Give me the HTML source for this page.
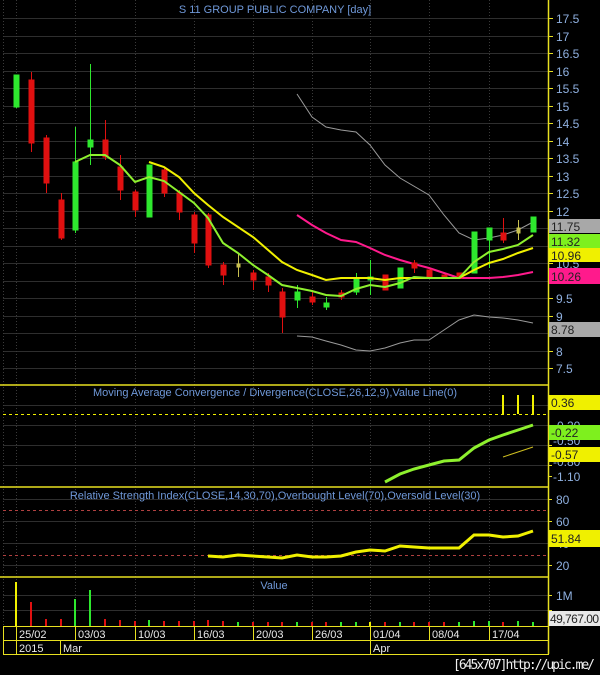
<!DOCTYPE html>
<html><head><meta charset="utf-8"><style>
html,body{margin:0;padding:0;background:#000;}
svg{display:block;font-family:"Liberation Sans",sans-serif;}
.ax{fill:#8fb0e0;font-size:12px;}
.t{fill:#6f98d8;font-size:11px;}
.bx{font-size:12px;fill:#222;}
.d{fill:#e8e8e8;font-size:11px;}
</style></head><body>
<svg width="600" height="675" viewBox="0 0 600 675" xmlns="http://www.w3.org/2000/svg">
<rect width="600" height="675" fill="#000"/>
<!-- grid horizontals price -->
<g stroke="#2e2e2e" stroke-width="1">
<line x1="3" x2="548" y1="18.5" y2="18.5"/><line x1="3" x2="548" y1="36.5" y2="36.5"/><line x1="3" x2="548" y1="53.5" y2="53.5"/><line x1="3" x2="548" y1="71.5" y2="71.5"/><line x1="3" x2="548" y1="88.5" y2="88.5"/><line x1="3" x2="548" y1="106.5" y2="106.5"/><line x1="3" x2="548" y1="123.5" y2="123.5"/><line x1="3" x2="548" y1="141.5" y2="141.5"/><line x1="3" x2="548" y1="158.5" y2="158.5"/><line x1="3" x2="548" y1="176.5" y2="176.5"/><line x1="3" x2="548" y1="193.5" y2="193.5"/><line x1="3" x2="548" y1="211.5" y2="211.5"/><line x1="3" x2="548" y1="228.5" y2="228.5"/><line x1="3" x2="548" y1="246.5" y2="246.5"/><line x1="3" x2="548" y1="263.5" y2="263.5"/><line x1="3" x2="548" y1="281.5" y2="281.5"/><line x1="3" x2="548" y1="298.5" y2="298.5"/><line x1="3" x2="548" y1="316.5" y2="316.5"/><line x1="3" x2="548" y1="333.5" y2="333.5"/><line x1="3" x2="548" y1="351.5" y2="351.5"/><line x1="3" x2="548" y1="368.5" y2="368.5"/>
<line x1="3" x2="548" y1="405.5" y2="405.5"/><line x1="3" x2="548" y1="425.5" y2="425.5"/><line x1="3" x2="548" y1="445.5" y2="445.5"/><line x1="3" x2="548" y1="465.5" y2="465.5"/>
<line x1="3" x2="548" y1="499.5" y2="499.5"/><line x1="3" x2="548" y1="521.5" y2="521.5"/><line x1="3" x2="548" y1="543.5" y2="543.5"/><line x1="3" x2="548" y1="565.5" y2="565.5"/>
<line x1="3" x2="548" y1="595.5" y2="595.5"/><line x1="3" x2="548" y1="610.5" y2="610.5"/>
</g>
<g stroke="#3a3a3a" stroke-width="1" stroke-dasharray="1,2">
<line x1="3.5" x2="3.5" y1="0" y2="626"/><line x1="16.5" x2="16.5" y1="0" y2="626"/><line x1="75.5" x2="75.5" y1="0" y2="626"/><line x1="135.5" x2="135.5" y1="0" y2="626"/><line x1="194.5" x2="194.5" y1="0" y2="626"/><line x1="253.5" x2="253.5" y1="0" y2="626"/><line x1="312.5" x2="312.5" y1="0" y2="626"/><line x1="370.5" x2="370.5" y1="0" y2="626"/><line x1="429.5" x2="429.5" y1="0" y2="626"/><line x1="489.5" x2="489.5" y1="0" y2="626"/>
</g>
<text x="275" y="13" class="t" text-anchor="middle">S 11 GROUP PUBLIC COMPANY [day]</text>

<!-- bollinger -->
<polyline fill="none" stroke="#9a9a9a" stroke-width="1" points="297,94 312,117 326,127 341,130 356,132 370,145 385,165 400,178 429,195 444,215 459,233 474,240 489,238 503,235 518,230 533,222"/>
<polyline fill="none" stroke="#9a9a9a" stroke-width="1" points="297,336 312,337 326,341 341,345 356,350 370,351 385,348 400,343 414,340 429,340 444,330 459,320 474,315 489,317 503,318 518,320 533,323"/>
<!-- magenta -->
<polyline fill="none" stroke="#ff1a8c" stroke-width="2" points="297,215 312,225 326,233 341,240 356,242 370,248 385,255 400,260 414,264 429,268 444,273 459,278 474,278 489,278 503,277 518,275 533,272"/>
<!-- candles -->
<g stroke-width="1">
<g stroke="#2ee82e" fill="#2ee82e"><line x1="16.5" x2="16.5" y1="75" y2="108"/><rect x="14" y="75" width="5" height="32"/></g>
<g stroke="#e01010" fill="#e01010"><line x1="31.5" x2="31.5" y1="72" y2="152"/><rect x="29" y="80" width="5" height="63"/></g>
<g stroke="#e01010" fill="#e01010"><line x1="46.5" x2="46.5" y1="135" y2="193"/><rect x="44" y="138" width="5" height="45"/></g>
<g stroke="#e01010" fill="#e01010"><line x1="61.5" x2="61.5" y1="193" y2="240"/><rect x="59" y="200" width="5" height="38"/></g>
<g stroke="#2ee82e" fill="#2ee82e"><line x1="75.5" x2="75.5" y1="127" y2="233"/><rect x="73" y="162" width="5" height="68"/></g>
<g stroke="#2ee82e" fill="#2ee82e"><line x1="90.5" x2="90.5" y1="64" y2="165"/><rect x="88" y="140" width="5" height="7"/></g>
<g stroke="#e01010" fill="#e01010"><line x1="105.5" x2="105.5" y1="120" y2="160"/><rect x="103" y="140" width="5" height="17"/></g>
<g stroke="#e01010" fill="#e01010"><line x1="120.5" x2="120.5" y1="155" y2="200"/><rect x="118" y="167" width="5" height="23"/></g>
<g stroke="#e01010" fill="#e01010"><line x1="135.5" x2="135.5" y1="190" y2="217"/><rect x="133" y="192" width="5" height="18"/></g>
<g stroke="#2ee82e" fill="#2ee82e"><rect x="147" y="165" width="5" height="52"/></g>
<g stroke="#e01010" fill="#e01010"><line x1="164.5" x2="164.5" y1="168" y2="197"/><rect x="162" y="170" width="5" height="23"/></g>
<g stroke="#e01010" fill="#e01010"><line x1="179.5" x2="179.5" y1="190" y2="220"/><rect x="177" y="193" width="5" height="19"/></g>
<g stroke="#e01010" fill="#e01010"><line x1="194.5" x2="194.5" y1="212" y2="253"/><rect x="192" y="215" width="5" height="28"/></g>
<g stroke="#e01010" fill="#e01010"><line x1="208.5" x2="208.5" y1="213" y2="268"/><rect x="206" y="215" width="5" height="50"/></g>
<g stroke="#e01010" fill="#e01010"><line x1="223.5" x2="223.5" y1="262" y2="285"/><rect x="221" y="265" width="5" height="10"/></g>
<g stroke="#c8c050" fill="#c8c050"><line x1="238.5" x2="238.5" y1="253" y2="277"/><rect x="237" y="264" width="3" height="3"/></g>
<g stroke="#e01010" fill="#e01010"><line x1="253.5" x2="253.5" y1="270" y2="290"/><rect x="251" y="273" width="5" height="7"/></g>
<g stroke="#e01010" fill="#e01010"><line x1="268.5" x2="268.5" y1="273" y2="292"/><rect x="266" y="277" width="5" height="8"/></g>
<g stroke="#e01010" fill="#e01010"><line x1="282.5" x2="282.5" y1="288" y2="333"/><rect x="280" y="292" width="5" height="25"/></g>
<g stroke="#2ee82e" fill="#2ee82e"><line x1="297.5" x2="297.5" y1="285" y2="308"/><rect x="295" y="292" width="5" height="8"/></g>
<g stroke="#e01010" fill="#e01010"><line x1="312.5" x2="312.5" y1="290" y2="305"/><rect x="310" y="297" width="5" height="5"/></g>
<g stroke="#2ee82e" fill="#2ee82e"><line x1="326.5" x2="326.5" y1="297" y2="310"/><rect x="324" y="303" width="5" height="4"/></g>
<g stroke="#e01010" fill="#e01010"><line x1="341.5" x2="341.5" y1="290" y2="300"/><rect x="339" y="293" width="5" height="4"/></g>
<g stroke="#2ee82e" fill="#2ee82e"><line x1="356.5" x2="356.5" y1="273" y2="295"/><rect x="354" y="278" width="5" height="14"/></g>
<g stroke="#2ee82e" fill="#2ee82e"><line x1="370.5" x2="370.5" y1="260" y2="295"/><rect x="368" y="277" width="5" height="3"/></g>
<g stroke="#e01010" fill="#e01010"><rect x="383" y="275" width="5" height="15"/></g>
<g stroke="#2ee82e" fill="#2ee82e"><rect x="398" y="268" width="5" height="20"/></g>
<g stroke="#e01010" fill="#e01010"><line x1="414.5" x2="414.5" y1="260" y2="273"/><rect x="412" y="263" width="5" height="5"/></g>
<g stroke="#e01010" fill="#e01010"><rect x="427" y="270" width="5" height="7"/></g>
<g stroke="#e01010" fill="#e01010"><rect x="442" y="275" width="5" height="3"/></g>
<g stroke="#e01010" fill="#e01010"><rect x="457" y="273" width="5" height="5"/></g>
<g stroke="#2ee82e" fill="#2ee82e"><rect x="472" y="232" width="5" height="41"/></g>
<g stroke="#2ee82e" fill="#2ee82e"><line x1="489.5" x2="489.5" y1="228" y2="268"/><rect x="487" y="228" width="5" height="12"/></g>
<g stroke="#e01010" fill="#e01010"><line x1="503.5" x2="503.5" y1="218" y2="243"/><rect x="501" y="233" width="5" height="7"/></g>
<g stroke="#c8c050" fill="#c8c050"><line x1="518.5" x2="518.5" y1="220" y2="240"/><rect x="517" y="228" width="3" height="5"/></g>
<g stroke="#2ee82e" fill="#2ee82e"><rect x="531" y="217" width="5" height="15"/></g>
</g>
<!-- MAs -->
<polyline fill="none" stroke="#f0f000" stroke-width="2" points="149,162 164,167 179,177 194,193 208,205 223,217 253,237 282,262 297,270 312,275 326,280 341,278 370,278 385,280 400,278 429,278 459,278 474,270 489,263 503,259 518,253 533,248"/>
<polyline fill="none" stroke="#8ef02e" stroke-width="2" points="75,162 90,155 105,155 120,165 135,182 149,177 164,181 179,192 194,203 208,218 223,243 238,253 253,265 268,275 282,285 297,288 312,291 326,295 341,296 356,289 370,285 385,287 400,283 414,277 429,278 459,278 474,262 489,252 503,249 518,245 533,235"/>

<!-- MACD -->
<line x1="3" x2="548" y1="414.5" y2="414.5" stroke="#f0f000" stroke-dasharray="3,3"/>
<g stroke="#f0f000" stroke-width="2"><line x1="503" x2="503" y1="395" y2="414"/><line x1="518" x2="518" y1="395" y2="414"/><line x1="533" x2="533" y1="395" y2="414"/></g>
<polyline fill="none" stroke="#8ef02e" stroke-width="3" points="385,482 400,474 414,469 429,465 444,461 459,460 474,448 489,440 503,435 518,430 533,425"/>
<line x1="503" y1="457" x2="533" y2="447" stroke="#d0c020" stroke-width="1"/>
<text x="275" y="396" class="t" text-anchor="middle">Moving Average Convergence / Divergence(CLOSE,26,12,9),Value Line(0)</text>

<!-- RSI -->
<line x1="3" x2="548" y1="510.5" y2="510.5" stroke="#b04040" stroke-dasharray="3,3"/>
<line x1="3" x2="548" y1="555.5" y2="555.5" stroke="#b04040" stroke-dasharray="3,3"/>
<polyline fill="none" stroke="#f0f000" stroke-width="3" points="208,556 223,557 238,555 253,556 268,557 282,558 297,555 312,557 326,557 341,556 356,552 370,550 385,551 400,546 414,547 429,548 444,548 459,548 474,535 489,535 503,537 518,536 533,531"/>
<text x="275" y="499" class="t" text-anchor="middle">Relative Strength Index(CLOSE,14,30,70),Overbought Level(70),Oversold Level(30)</text>

<!-- Value -->
<text x="274" y="589" class="t" text-anchor="middle">Value</text>
<g stroke-width="2">
<line x1="16" x2="16" y1="582" y2="626" stroke="#f0f000"/>
<line x1="31" x2="31" y1="602" y2="626" stroke="#e01010"/>
<line x1="46" x2="46" y1="619" y2="626" stroke="#e01010"/>
<line x1="61" x2="61" y1="619" y2="626" stroke="#e01010"/>
<line x1="75" x2="75" y1="599" y2="626" stroke="#2ee82e"/>
<line x1="90" x2="90" y1="590" y2="626" stroke="#2ee82e"/>
<line x1="105" x2="105" y1="619" y2="626" stroke="#e01010"/>
<line x1="120" x2="120" y1="620" y2="626" stroke="#e01010"/>
<line x1="135" x2="135" y1="621" y2="626" stroke="#e01010"/>
<line x1="149" x2="149" y1="620" y2="626" stroke="#2ee82e"/>
<line x1="164" x2="164" y1="621" y2="626" stroke="#e01010"/>
<line x1="179" x2="179" y1="621" y2="626" stroke="#e01010"/>
<line x1="194" x2="194" y1="621" y2="626" stroke="#e01010"/>
<line x1="208" x2="208" y1="620" y2="626" stroke="#e01010"/>
<line x1="223" x2="223" y1="621" y2="626" stroke="#e01010"/>
<line x1="238" x2="238" y1="622" y2="626" stroke="#2ee82e"/>
<line x1="253" x2="253" y1="622" y2="626" stroke="#e01010"/>
<line x1="268" x2="268" y1="622" y2="626" stroke="#e01010"/>
<line x1="282" x2="282" y1="622" y2="626" stroke="#e01010"/>
<line x1="297" x2="297" y1="622" y2="626" stroke="#2ee82e"/>
<line x1="312" x2="312" y1="622" y2="626" stroke="#e01010"/>
<line x1="326" x2="326" y1="622" y2="626" stroke="#e01010"/>
<line x1="341" x2="341" y1="622" y2="626" stroke="#2ee82e"/>
<line x1="356" x2="356" y1="622" y2="626" stroke="#2ee82e"/>
<line x1="370" x2="370" y1="622" y2="626" stroke="#f0f000"/>
<line x1="385" x2="385" y1="622" y2="626" stroke="#e01010"/>
<line x1="400" x2="400" y1="622" y2="626" stroke="#2ee82e"/>
<line x1="414" x2="414" y1="622" y2="626" stroke="#e01010"/>
<line x1="429" x2="429" y1="622" y2="626" stroke="#e01010"/>
<line x1="444" x2="444" y1="622" y2="626" stroke="#e01010"/>
<line x1="459" x2="459" y1="622" y2="626" stroke="#2ee82e"/>
<line x1="474" x2="474" y1="621" y2="626" stroke="#2ee82e"/>
<line x1="489" x2="489" y1="621" y2="626" stroke="#2ee82e"/>
<line x1="503" x2="503" y1="622" y2="626" stroke="#e01010"/>
<line x1="518" x2="518" y1="621" y2="626" stroke="#2ee82e"/>
<line x1="533" x2="533" y1="622" y2="626" stroke="#2ee82e"/>
</g>

<!-- panel separators -->
<g stroke="#e8e020" stroke-width="1.5">
<line x1="0" x2="548" y1="385" y2="385"/>
<line x1="0" x2="548" y1="487" y2="487"/>
<line x1="0" x2="548" y1="577" y2="577"/>
<line x1="548.5" x2="548.5" y1="0" y2="654"/>
</g>
<!-- date rows -->
<g stroke="#e8e020" stroke-width="1" fill="none">
<rect x="3.5" y="626.5" width="545" height="28"/>
<line x1="3" x2="548" y1="640.5" y2="640.5"/>
<line x1="16.5" x2="16.5" y1="626" y2="654"/>
<line x1="75.5" x2="75.5" y1="626" y2="640"/>
<line x1="135.5" x2="135.5" y1="626" y2="640"/>
<line x1="194.5" x2="194.5" y1="626" y2="640"/>
<line x1="253.5" x2="253.5" y1="626" y2="640"/>
<line x1="312.5" x2="312.5" y1="626" y2="640"/>
<line x1="370.5" x2="370.5" y1="626" y2="654"/>
<line x1="429.5" x2="429.5" y1="626" y2="640"/>
<line x1="489.5" x2="489.5" y1="626" y2="640"/>
<line x1="60.5" x2="60.5" y1="640" y2="654"/>
</g>
<g class="d">
<text x="19" y="638">25/02</text><text x="78" y="638">03/03</text><text x="138" y="638">10/03</text><text x="197" y="638">16/03</text><text x="256" y="638">20/03</text><text x="315" y="638">26/03</text><text x="373" y="638">01/04</text><text x="432" y="638">08/04</text><text x="492" y="638">17/04</text>
<text x="19" y="652">2015</text><text x="63" y="652">Mar</text><text x="373" y="652">Apr</text>
</g>
<text x="453" y="669" fill="#f0f0f0" font-size="13" font-family="DejaVu Sans Mono, Liberation Mono, monospace" textLength="142">[645x707]http://upic.me/</text>

<!-- right axis ticks -->
<g stroke="#e8e020" stroke-width="1">
<line x1="548" x2="553" y1="18.5" y2="18.5"/><line x1="548" x2="553" y1="36.5" y2="36.5"/><line x1="548" x2="553" y1="53.5" y2="53.5"/><line x1="548" x2="553" y1="71.5" y2="71.5"/><line x1="548" x2="553" y1="88.5" y2="88.5"/><line x1="548" x2="553" y1="106.5" y2="106.5"/><line x1="548" x2="553" y1="123.5" y2="123.5"/><line x1="548" x2="553" y1="141.5" y2="141.5"/><line x1="548" x2="553" y1="158.5" y2="158.5"/><line x1="548" x2="553" y1="176.5" y2="176.5"/><line x1="548" x2="553" y1="193.5" y2="193.5"/><line x1="548" x2="553" y1="211.5" y2="211.5"/><line x1="548" x2="553" y1="246.5" y2="246.5"/><line x1="548" x2="553" y1="263.5" y2="263.5"/><line x1="548" x2="553" y1="298.5" y2="298.5"/><line x1="548" x2="553" y1="316.5" y2="316.5"/><line x1="548" x2="553" y1="351.5" y2="351.5"/><line x1="548" x2="553" y1="368.5" y2="368.5"/>
<line x1="548" x2="552" y1="405.5" y2="405.5"/><line x1="548" x2="552" y1="425.5" y2="425.5"/><line x1="548" x2="552" y1="445.5" y2="445.5"/><line x1="548" x2="552" y1="465.5" y2="465.5"/><line x1="548" x2="552" y1="476.5" y2="476.5"/>
<line x1="548" x2="552" y1="499.5" y2="499.5"/><line x1="548" x2="552" y1="521.5" y2="521.5"/><line x1="548" x2="552" y1="565.5" y2="565.5"/>
<line x1="548" x2="552" y1="595.5" y2="595.5"/><line x1="548" x2="552" y1="610.5" y2="610.5"/>
</g>
<g class="ax">
<text x="556" y="23">17.5</text><text x="556" y="41">17</text><text x="556" y="58">16.5</text><text x="556" y="76">16</text><text x="556" y="93">15.5</text><text x="556" y="111">15</text><text x="556" y="128">14.5</text><text x="556" y="146">14</text><text x="556" y="163">13.5</text><text x="556" y="181">13</text><text x="556" y="198">12.5</text><text x="556" y="216">12</text><text x="556" y="268">10.5</text><text x="556" y="303">9.5</text><text x="556" y="321">9</text><text x="556" y="356">8</text><text x="556" y="373">7.5</text>
<text x="556" y="410">0.10</text><text x="553" y="430">-0.20</text><text x="553" y="445">-0.50</text><text x="553" y="466">-0.80</text><text x="553" y="481">-1.10</text>
<text x="556" y="504">80</text><text x="556" y="526">60</text><text x="556" y="548">40</text><text x="556" y="570">20</text>
<text x="556" y="600">1M</text>
</g>
<!-- value boxes -->
<rect x="549" y="219" width="51" height="14" fill="#a8a8a8"/><text x="551" y="231" class="bx">11.75</text>
<rect x="549" y="234" width="51" height="14" fill="#7ef01e"/><text x="551" y="246" class="bx">11.32</text>
<rect x="549" y="248" width="51" height="14" fill="#f0f000"/><text x="551" y="260" class="bx">10.96</text>
<rect x="549" y="268" width="51" height="16" fill="#ff1a8c"/><text x="551" y="281" class="bx">10.26</text>
<rect x="549" y="322" width="51" height="15" fill="#a8a8a8"/><text x="551" y="334" class="bx">8.78</text>
<rect x="549" y="395" width="51" height="15" fill="#f0f000"/><text x="551" y="407" class="bx">0.36</text>
<rect x="549" y="425" width="51" height="15" fill="#7ef01e"/><text x="551" y="437" class="bx">-0.22</text>
<rect x="549" y="447" width="51" height="15" fill="#f0f000"/><text x="551" y="459" class="bx">-0.57</text>
<rect x="549" y="530" width="51" height="17" fill="#f0f000"/><text x="551" y="543" class="bx">51.84</text>
<rect x="549" y="611" width="51" height="15" fill="#e8e8e8"/><text x="550" y="623" class="bx" font-size="11" textLength="49">49,767.00</text>
</svg>
</body></html>
